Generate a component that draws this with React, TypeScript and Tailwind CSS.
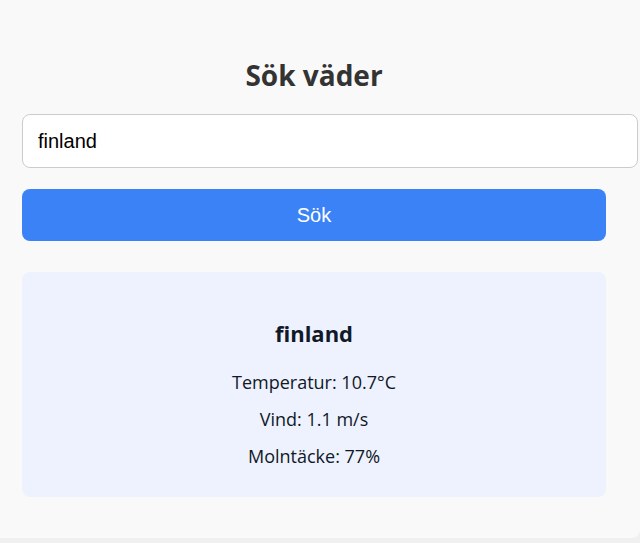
export default function App() {
  return (
    <div className="min-h-screen bg-[#f0f0f0]">
      <div
        className="w-[640px] h-[538px] bg-[#f9f9f9] rounded-br-lg px-[22px] pt-[53px]"
        style={{ fontFamily: '"Open Sans", sans-serif' }}
      >
        <div className="w-[584px]">
          <h1 className="text-center text-[28px] font-bold text-[#333] leading-[44px]">Sök väder</h1>
          <input
            defaultValue="finland"
            className="mt-[17px] block w-[616px] h-[54px] px-[15px] border border-[#ccc] rounded-lg bg-white text-[20px] text-black outline-none"
            style={{ fontFamily: '"Liberation Sans", Arial, sans-serif' }}
          />
          <button
            className="mt-[21px] block w-full h-[52px] bg-[#3b82f6] rounded-lg text-white text-[20px]"
            style={{ fontFamily: '"Liberation Sans", Arial, sans-serif' }}
          >
            Sök
          </button>
          <div className="mt-[31px] h-[225px] bg-[#edf2fe] rounded-lg flex flex-col items-center pt-[45px] text-[#111827]">
            <h2 className="text-[22px] font-bold leading-[32px]">finland</h2>
            <p className="mt-[22px] text-[18px] leading-[22px]">Temperatur: 10.7°C</p>
            <p className="mt-[15px] text-[18px] leading-[22px]">Vind: 1.1 m/s</p>
            <p className="mt-[15px] text-[18px] leading-[22px]">Molntäcke: 77%</p>
          </div>
        </div>
      </div>
    </div>
  );
}
